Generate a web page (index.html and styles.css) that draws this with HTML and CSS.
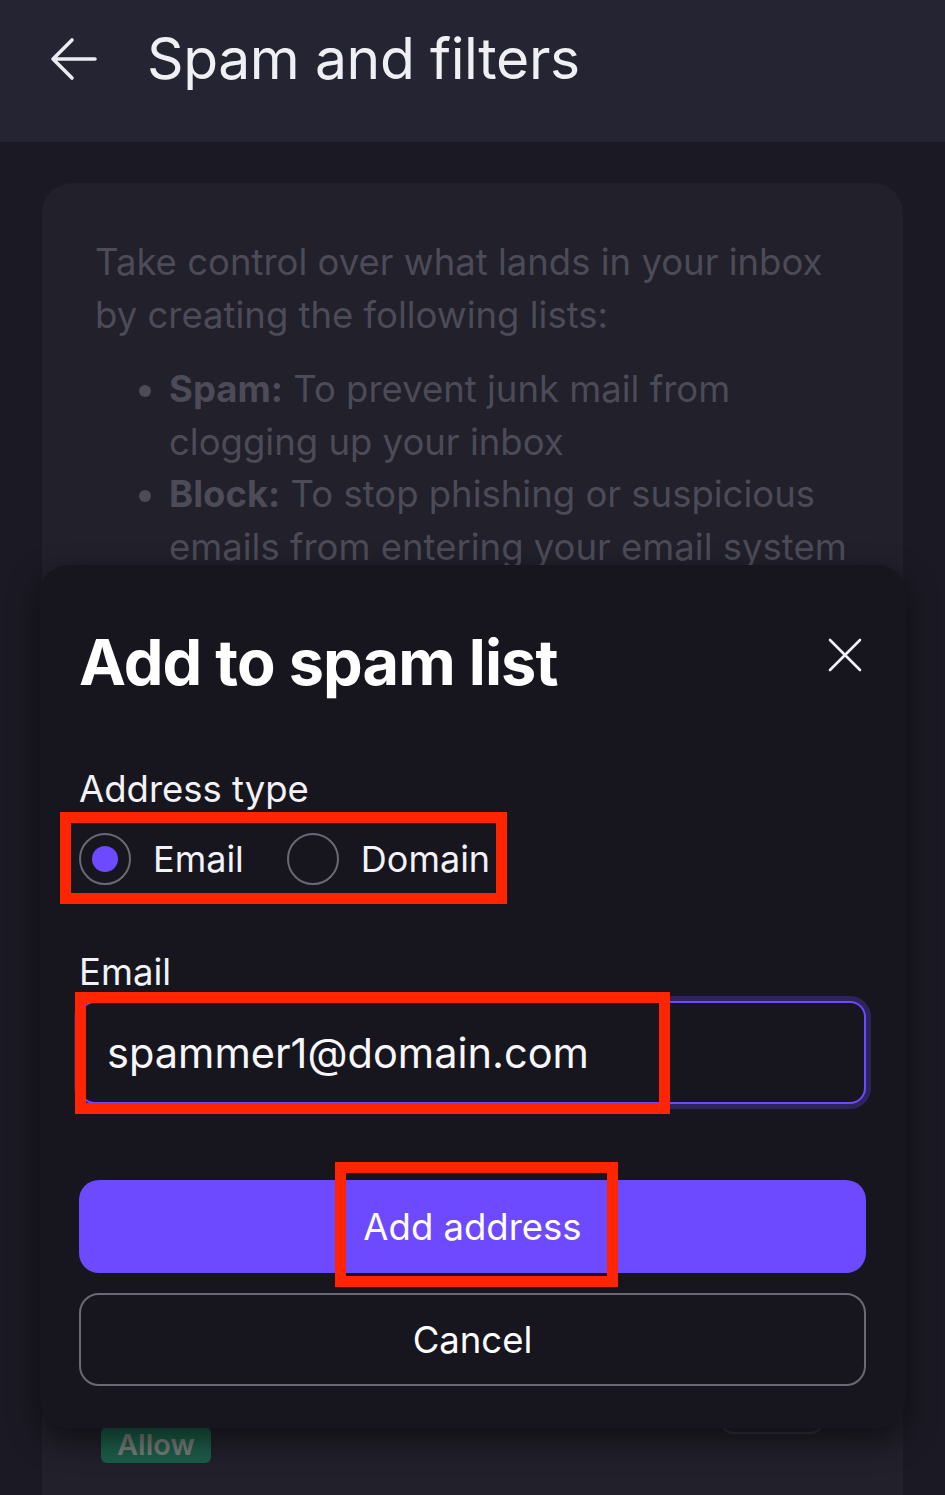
FILE: index.html
```html
<!DOCTYPE html>
<html lang="en">
<head>
<meta charset="utf-8">
<title>Spam and filters</title>
<link rel="stylesheet" href="styles.css">
</head>
<body>
  <header class="topbar">
    <svg class="back-icon" viewBox="0 0 48 48" width="48" height="48" aria-hidden="true">
      <path d="M45 24H4M22 5L3 24l19 19" fill="none" stroke="#ecebf1" stroke-width="3.6" stroke-linecap="round" stroke-linejoin="round"/>
    </svg>
    <h1 class="topbar-title">Spam and filters</h1>
  </header>

  <main class="content">
    <section class="card">
      <p class="intro">Take control over what lands in your inbox by creating the following lists:</p>
      <ul class="intro-list">
        <li><strong>Spam:</strong> To prevent junk mail from clogging up your inbox</li>
        <li><strong>Block:</strong> To stop phishing or suspicious emails from entering your email system</li>
      </ul>
      <div class="list-row">
        <span class="badge">Allow</span>
        <span class="ghost-btn"></span>
      </div>
    </section>
  </main>

  <div class="modal">
    <div class="modal-head">
      <h2 class="modal-title">Add to spam list</h2>
      <svg class="close-icon" viewBox="0 0 34 34" width="34" height="34" aria-hidden="true">
        <path d="M2 2L32 32M32 2L2 32" fill="none" stroke="#f2f1f6" stroke-width="2.6" stroke-linecap="round"/>
      </svg>
    </div>

    <div class="field-label first">Address type</div>
    <div class="radio-group">
      <label class="radio-item">
        <span class="radio checked"><span class="radio-dot"></span></span>
        <span class="radio-text">Email</span>
      </label>
      <label class="radio-item">
        <span class="radio"></span>
        <span class="radio-text">Domain</span>
      </label>
    </div>

    <div class="field-label second">Email</div>
    <input class="text-input" type="text" value="spammer1@domain.com">

    <button class="btn btn-primary">Add address</button>
    <button class="btn btn-outline">Cancel</button>
  </div>

  <div class="mark mark-radios"></div>
  <div class="mark mark-input"></div>
  <div class="mark mark-button"></div>
</body>
</html>
```

FILE: styles.css
```css
* {
  box-sizing: border-box;
}

html, body {
  margin: 0;
  padding: 0;
}

body {
  position: relative;
  width: 945px;
  height: 1495px;
  overflow: hidden;
  background: #1b1a24;
  font-family: Inter, "Noto Sans", sans-serif;
  color: #f2f1f6;
}

.topbar {
  height: 142px;
  background: #252432;
  display: flex;
  align-items: center;
  padding: 0 0 24px 50px;
}

.back-icon {
  flex: none;
}

.topbar-title {
  margin: 0 0 0 49px;
  font-size: 57px;
  line-height: 70px;
  font-weight: 400;
  color: #f0eff4;
  letter-spacing: -0.4px;
}

.content {
  padding: 41px 42px 0 42px;
}

.card {
  width: 861px;
  background: #21202b;
  border-radius: 30px;
  padding: 53px 50px 60px 53px;
  color: #4c4b57;
  font-size: 36.5px;
  line-height: 52.5px;
}

.intro {
  margin: 0;
}

.intro-list {
  margin: 22px 0 0 0;
  padding-left: 74px;
}

.intro-list strong {
  font-weight: 700;
}

.list-row {
  display: flex;
  align-items: flex-start;
  justify-content: space-between;
  margin-top: 854px;
}

.badge {
  margin-left: 6px;
  height: 36px;
  padding: 0 16px;
  border-radius: 6px;
  background: #1b5c48;
  color: #767c7a;
  font-size: 29px;
  font-weight: 600;
  line-height: 36px;
}

.ghost-btn {
  width: 102px;
  height: 66px;
  margin-top: -59px;
  margin-right: 30px;
  border: 2px solid #34333f;
  border-radius: 12px;
}

.modal {
  position: absolute;
  top: 565px;
  left: 40px;
  width: 866px;
  height: 863px;
  padding: 61px 40px 0 39px;
  background: #17161f;
  border-radius: 28px;
  box-shadow: 0 12px 30px rgba(0, 0, 0, 0.55);
  display: flex;
  flex-direction: column;
}

.modal-head {
  display: flex;
  align-items: center;
  justify-content: space-between;
  height: 72px;
}

.modal-title {
  margin: 0;
  font-size: 63px;
  line-height: 72px;
  font-weight: 700;
  color: #ffffff;
  letter-spacing: -0.9px;
}

.close-icon {
  flex: none;
  margin-right: 4px;
  margin-top: -14px;
}

.field-label {
  font-size: 36.5px;
  line-height: 44px;
  color: #f3f2f7;
}

.field-label.first {
  margin-top: 69px;
}

.field-label.second {
  margin-top: 65px;
}

.radio-group {
  margin-top: 22px;
  height: 52px;
  display: flex;
  align-items: center;
  gap: 43px;
}

.radio-item {
  display: flex;
  align-items: center;
  gap: 22px;
}

.radio {
  width: 52px;
  height: 52px;
  border: 2.5px solid #696874;
  border-radius: 50%;
  display: flex;
  align-items: center;
  justify-content: center;
}

.radio-dot {
  width: 26px;
  height: 26px;
  border-radius: 50%;
  background: #6d4aff;
}

.radio-text {
  font-size: 36px;
  line-height: 44px;
  color: #f3f2f7;
}

.text-input {
  margin-top: 7px;
  width: 100%;
  height: 103px;
  padding: 0 0 0 26px;
  border: 2px solid #6d4aff;
  border-radius: 16px;
  box-shadow: 0 0 0 5px rgba(109, 74, 255, 0.28);
  background: #17161f;
  color: #f7f6fb;
  font-family: Inter, "Noto Sans", sans-serif;
  font-size: 41.5px;
  outline: none;
}

.btn {
  display: block;
  width: 100%;
  height: 93px;
  border-radius: 20px;
  font-family: Inter, "Noto Sans", sans-serif;
  font-size: 36.5px;
  color: #ffffff;
  cursor: pointer;
}

.btn-primary {
  margin-top: 76px;
  background: #6d4aff;
  border: none;
}

.btn-outline {
  margin-top: 20px;
  background: transparent;
  border: 2px solid #6a6975;
}

.mark {
  position: absolute;
  border: 11px solid #ff2500;
  pointer-events: none;
}

.mark-radios {
  left: 60px;
  top: 812px;
  width: 447px;
  height: 92px;
}

.mark-input {
  left: 75px;
  top: 992px;
  width: 595px;
  height: 122px;
}

.mark-button {
  left: 335px;
  top: 1162px;
  width: 283px;
  height: 125px;
}
```
